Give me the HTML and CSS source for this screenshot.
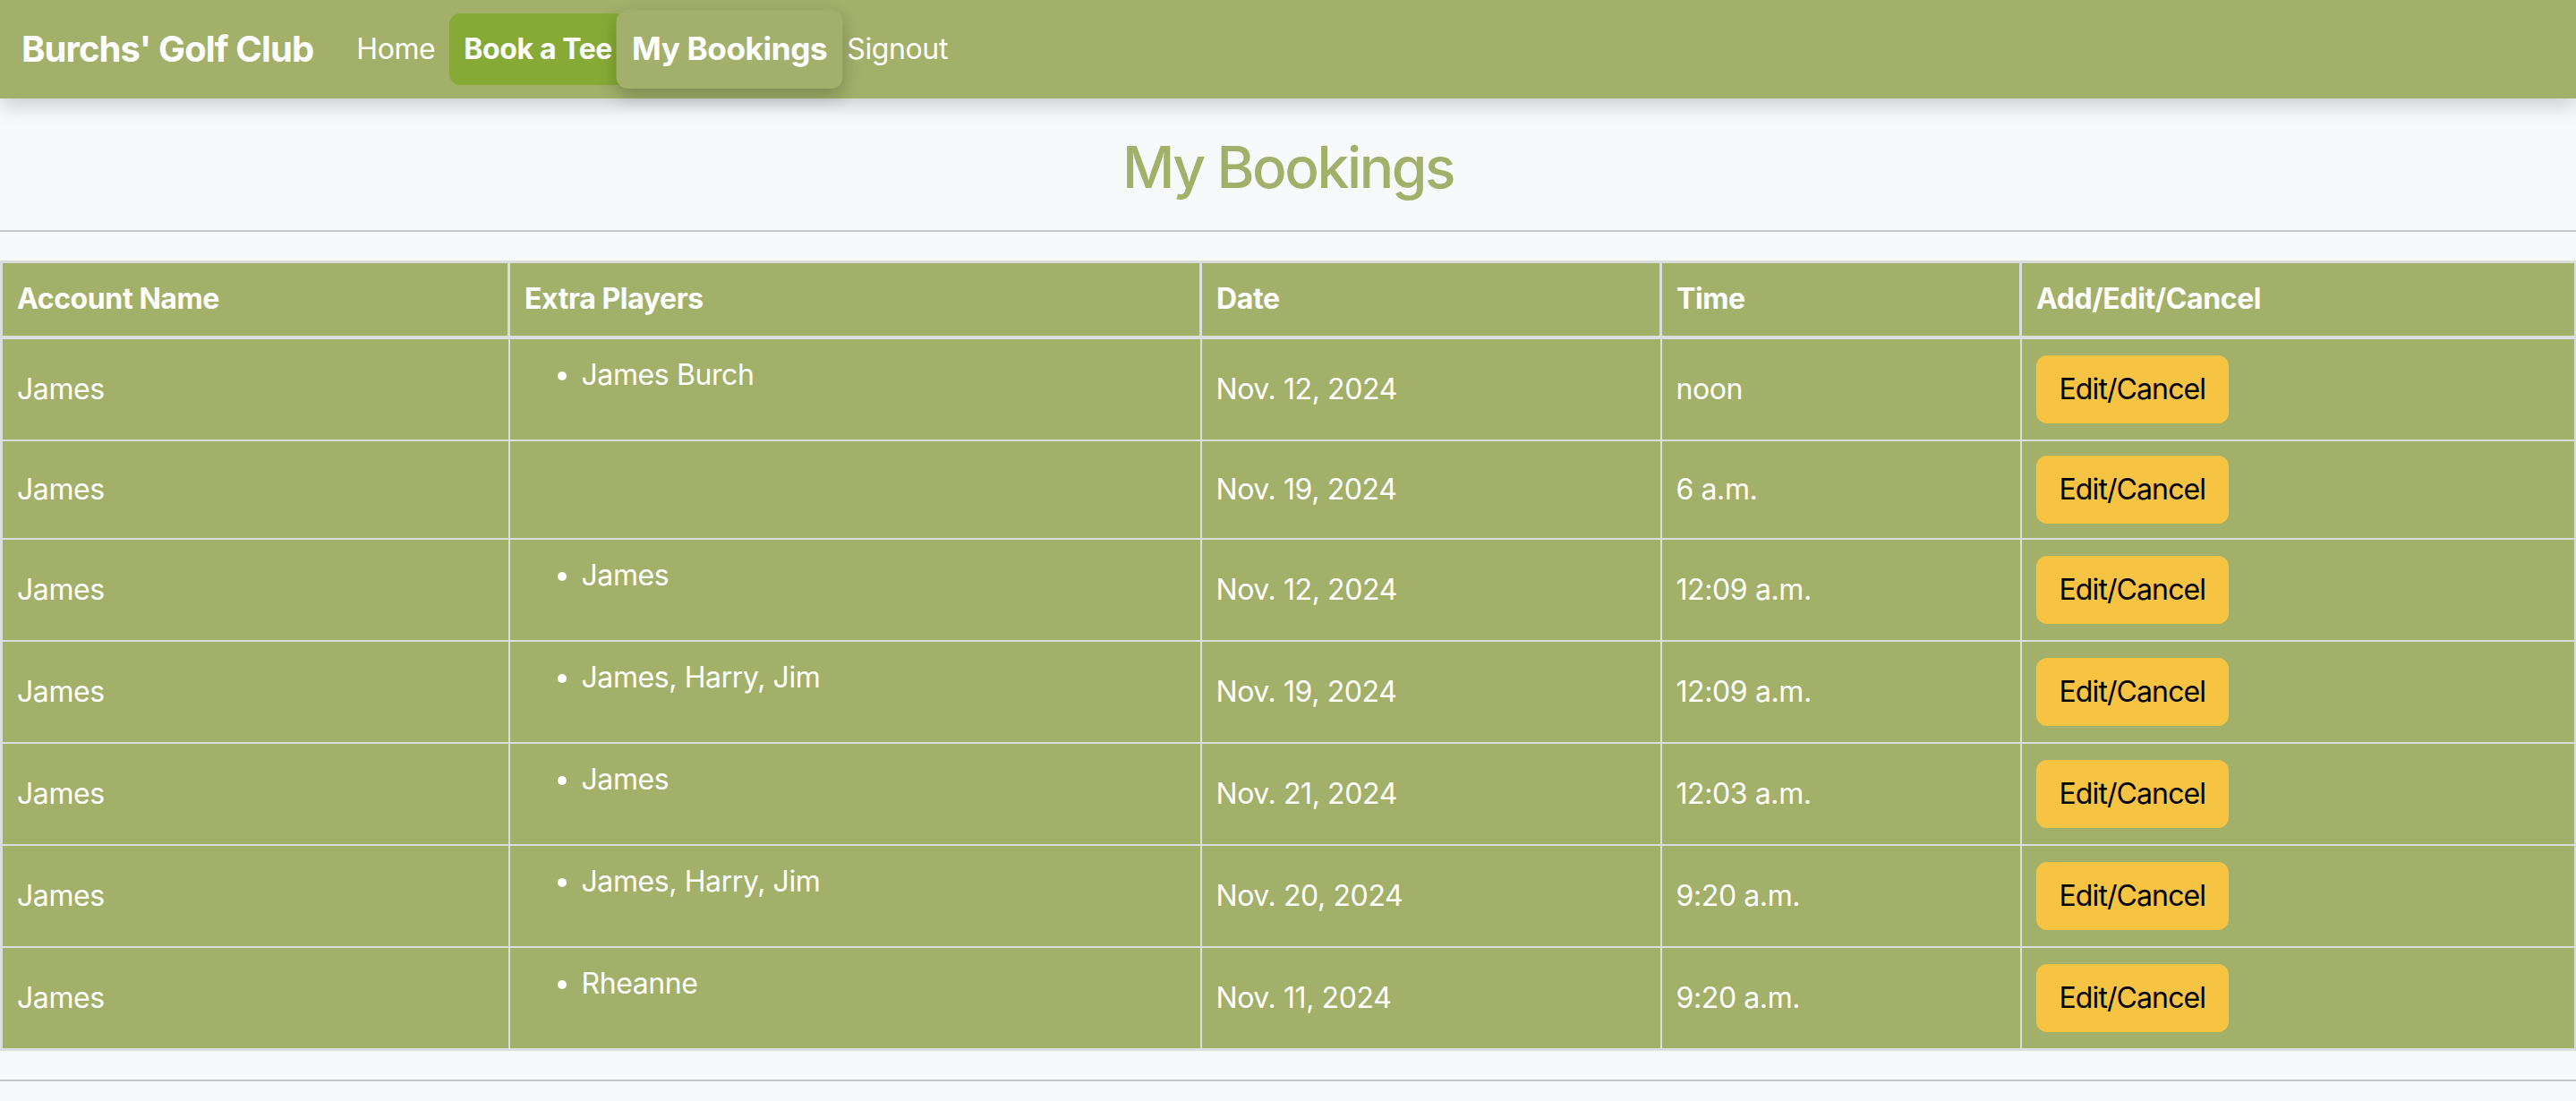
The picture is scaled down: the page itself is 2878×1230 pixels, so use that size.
FILE: index.html
```html
<!DOCTYPE html>
<html lang="en">
<head>
<meta charset="utf-8">
<title>My Bookings - Burchs' Golf Club</title>
<link rel="stylesheet" href="styles.css">
</head>
<body>
<nav class="navbar">
  <a class="brand" href="#">Burchs' Golf Club</a>
  <ul class="nav">
    <li><a class="nav-link" href="#">Home</a></li>
    <li><a class="nav-link book" href="#">Book a Tee</a></li>
    <li><a class="nav-link current" href="#">My Bookings</a></li>
    <li><a class="nav-link" href="#">Signout</a></li>
  </ul>
</nav>
<main class="main">
  <h2 class="title">My Bookings</h2>
  <hr class="rule">
  <table class="bookings">
    <colgroup>
      <col class="c-account">
      <col class="c-players">
      <col class="c-date">
      <col class="c-time">
      <col class="c-action">
    </colgroup>
    <thead>
      <tr>
        <th>Account Name</th>
        <th>Extra Players</th>
        <th>Date</th>
        <th>Time</th>
        <th>Add/Edit/Cancel</th>
      </tr>
    </thead>
    <tbody>
      <tr>
        <td>James</td>
        <td><ul class="players"><li>James Burch</li></ul></td>
        <td>Nov. 12, 2024</td>
        <td>noon</td>
        <td><a class="btn" href="#">Edit/Cancel</a></td>
      </tr>
      <tr>
        <td>James</td>
        <td><ul class="players"></ul></td>
        <td>Nov. 19, 2024</td>
        <td>6 a.m.</td>
        <td><a class="btn" href="#">Edit/Cancel</a></td>
      </tr>
      <tr>
        <td>James</td>
        <td><ul class="players"><li>James</li></ul></td>
        <td>Nov. 12, 2024</td>
        <td>12:09 a.m.</td>
        <td><a class="btn" href="#">Edit/Cancel</a></td>
      </tr>
      <tr>
        <td>James</td>
        <td><ul class="players"><li>James, Harry, Jim</li></ul></td>
        <td>Nov. 19, 2024</td>
        <td>12:09 a.m.</td>
        <td><a class="btn" href="#">Edit/Cancel</a></td>
      </tr>
      <tr>
        <td>James</td>
        <td><ul class="players"><li>James</li></ul></td>
        <td>Nov. 21, 2024</td>
        <td>12:03 a.m.</td>
        <td><a class="btn" href="#">Edit/Cancel</a></td>
      </tr>
      <tr>
        <td>James</td>
        <td><ul class="players"><li>James, Harry, Jim</li></ul></td>
        <td>Nov. 20, 2024</td>
        <td>9:20 a.m.</td>
        <td><a class="btn" href="#">Edit/Cancel</a></td>
      </tr>
      <tr>
        <td>James</td>
        <td><ul class="players"><li>Rheanne</li></ul></td>
        <td>Nov. 11, 2024</td>
        <td>9:20 a.m.</td>
        <td><a class="btn" href="#">Edit/Cancel</a></td>
      </tr>
    </tbody>
  </table>
  <hr class="rule">
</main>
</body>
</html>
```

FILE: styles.css
```css
* { box-sizing: border-box; }

html, body {
  margin: 0;
  padding: 0;
}

body {
  background: #f8f9fa;
  font-family: Inter, "Noto Sans", "Liberation Sans", sans-serif;
  font-size: 32px;
  line-height: 48px;
  color: #212529;
  letter-spacing: -0.4px;
}

a { text-decoration: none; }

/* NAVBAR */
.navbar {
  position: relative;
  z-index: 2;
  height: 110px;
  background: #a2b06a;
  display: flex;
  align-items: center;
  padding: 0 24px;
  box-shadow: 0 8px 22px rgba(0, 0, 0, 0.18);
}

.brand {
  color: #ffffff;
  font-size: 40px;
  line-height: 60px;
  font-weight: 700;
  padding: 10px 0;
  margin-right: 32px;
  letter-spacing: -0.9px;
}

.nav {
  display: flex;
  align-items: center;
  list-style: none;
  margin: 0;
  padding: 0;
}

.nav-link {
  display: block;
  color: #ffffff;
  padding: 16px;
  border-radius: 12px;
  line-height: 48px;
}

.nav-link.book {
  background: #87aa36;
  font-weight: 700;
}

.nav-link.current {
  position: relative;
  z-index: 1;
  font-weight: 700;
  background: #a3b06c;
  transform: scale(1.1);
  box-shadow: 0 8px 18px rgba(0, 0, 0, 0.22);
}

/* MAIN */
.main {
  padding-top: 38px;
}

.title {
  margin: 0 0 32px;
  text-align: center;
  font-size: 64px;
  line-height: 77px;
  font-weight: 500;
  color: #a2b06a;
  letter-spacing: -2.4px;
}

.rule {
  margin: 32px 0;
  border: 0;
  border-top: 2px solid #c4c6c8;
  height: 0;
}

/* TABLE */
.bookings {
  width: calc(100% - 2px);
  table-layout: fixed;
  border-collapse: collapse;
  background: #a2b069;
  color: #ffffff;
  border: 3px solid #dcdddd;
  margin-bottom: 32px;
}

.c-account { width: 567px; }
.c-players { width: 773px; }
.c-date { width: 514px; }
.c-time { width: 402px; }
.c-action { width: 620px; }

.bookings th,
.bookings td {
  border: 2px solid #dcdddd;
  padding: 16px;
  text-align: left;
  vertical-align: middle;
}

.bookings th {
  font-weight: 700;
  border-width: 3px 3px 4px 3px;
  padding-top: 16px;
  padding-bottom: 17px;
}

.players {
  margin: 0 0 32px;
  padding-left: 64px;
}

.btn {
  display: inline-block;
  background: #f6c343;
  border: 2px solid #f6c343;
  color: #000000;
  padding: 12px 24px;
  border-radius: 12px;
  line-height: 48px;
  font-size: 32px;
  letter-spacing: -0.9px;
}
```
